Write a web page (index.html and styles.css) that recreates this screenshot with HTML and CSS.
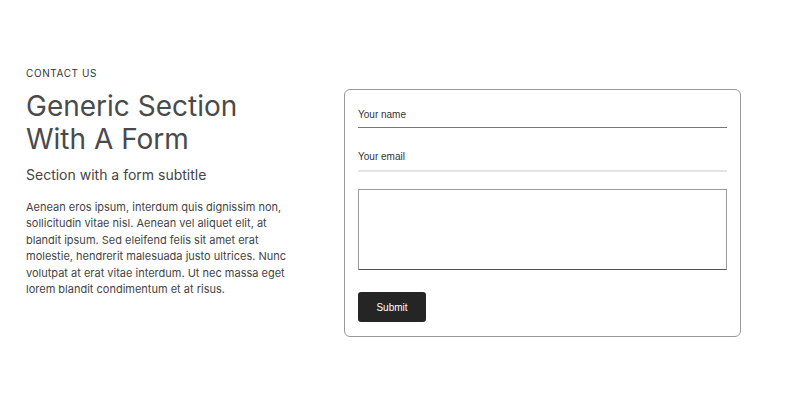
FILE: index.html
```html
<!DOCTYPE html>
<html lang="en">
<head>
<meta charset="utf-8">
<title>Contact</title>
<link rel="stylesheet" href="styles.css">
</head>
<body>
<section class="section">
  <div class="intro">
    <p class="eyebrow">CONTACT US</p>
    <h1 class="title">Generic Section With A Form</h1>
    <p class="subtitle">Section with a form subtitle</p>
    <p class="body">Aenean eros ipsum, interdum quis dignissim non, sollicitudin vitae nisl. Aenean vel aliquet elit, at blandit ipsum. Sed eleifend felis sit amet erat molestie, hendrerit malesuada justo ultrices. Nunc volutpat at erat vitae interdum. Ut nec massa eget lorem blandit condimentum et at risus.</p>
  </div>
  <form class="card">
    <input class="field field-active" type="text" placeholder="Your name">
    <input class="field field-idle" type="email" placeholder="Your email">
    <textarea class="message"></textarea>
    <button class="submit" type="button">Submit</button>
  </form>
</section>
</body>
</html>
```

FILE: styles.css
```css
html, body {
  margin: 0;
  padding: 0;
  background: #ffffff;
}

body {
  font-family: Inter, "Liberation Sans", sans-serif;
  color: #444444;
}

.section {
  display: flex;
  align-items: flex-start;
  padding: 66px 59px 0 26px;
  gap: 50px;
}

.intro {
  width: 268px;
  flex: none;
}

.eyebrow {
  margin: 0;
  font-size: 10px;
  line-height: 14px;
  letter-spacing: 0.6px;
  color: #333333;
}

.title {
  margin: 10px 0 0;
  font-size: 28px;
  font-weight: 400;
  line-height: 33px;
  color: #4a4a4a;
}

.subtitle {
  margin: 9px 0 0;
  font-size: 14px;
  line-height: 20px;
  color: #444444;
}

.body {
  margin: 14px 0 0;
  font-size: 11px;
  line-height: 16.4px;
  color: #444444;
}

.card {
  flex: 1;
  margin-top: 23px;
  display: flex;
  flex-direction: column;
  align-items: stretch;
  padding: 14px 13px 14px 13px;
  border: 1px solid #999999;
  border-radius: 6px;
}

.field {
  box-sizing: border-box;
  height: 24px;
  padding: 0 0 2px 0;
  border: none;
  outline: none;
  font-family: "Liberation Sans", Arial, sans-serif;
  font-size: 10px;
  color: #333333;
  background: transparent;
}

.field::placeholder {
  color: #333333;
}

.field-active {
  border-bottom: 1px solid #777777;
}

.field-idle {
  margin-top: 17px;
  height: 27px;
  border-bottom: 2px solid #e4e4e4;
}

.message {
  box-sizing: border-box;
  margin-top: 17px;
  height: 81px;
  resize: none;
  border: 1px solid #9a9a9a;
  border-bottom-color: #555555;
  outline: none;
  font-family: "Liberation Sans", Arial, sans-serif;
}

.submit {
  align-self: flex-start;
  margin-top: 22px;
  width: 68px;
  height: 30px;
  border: none;
  border-radius: 3px;
  background: #252525;
  color: #ffffff;
  font-family: "Liberation Sans", Arial, sans-serif;
  font-size: 10px;
  padding: 0;
}
```
